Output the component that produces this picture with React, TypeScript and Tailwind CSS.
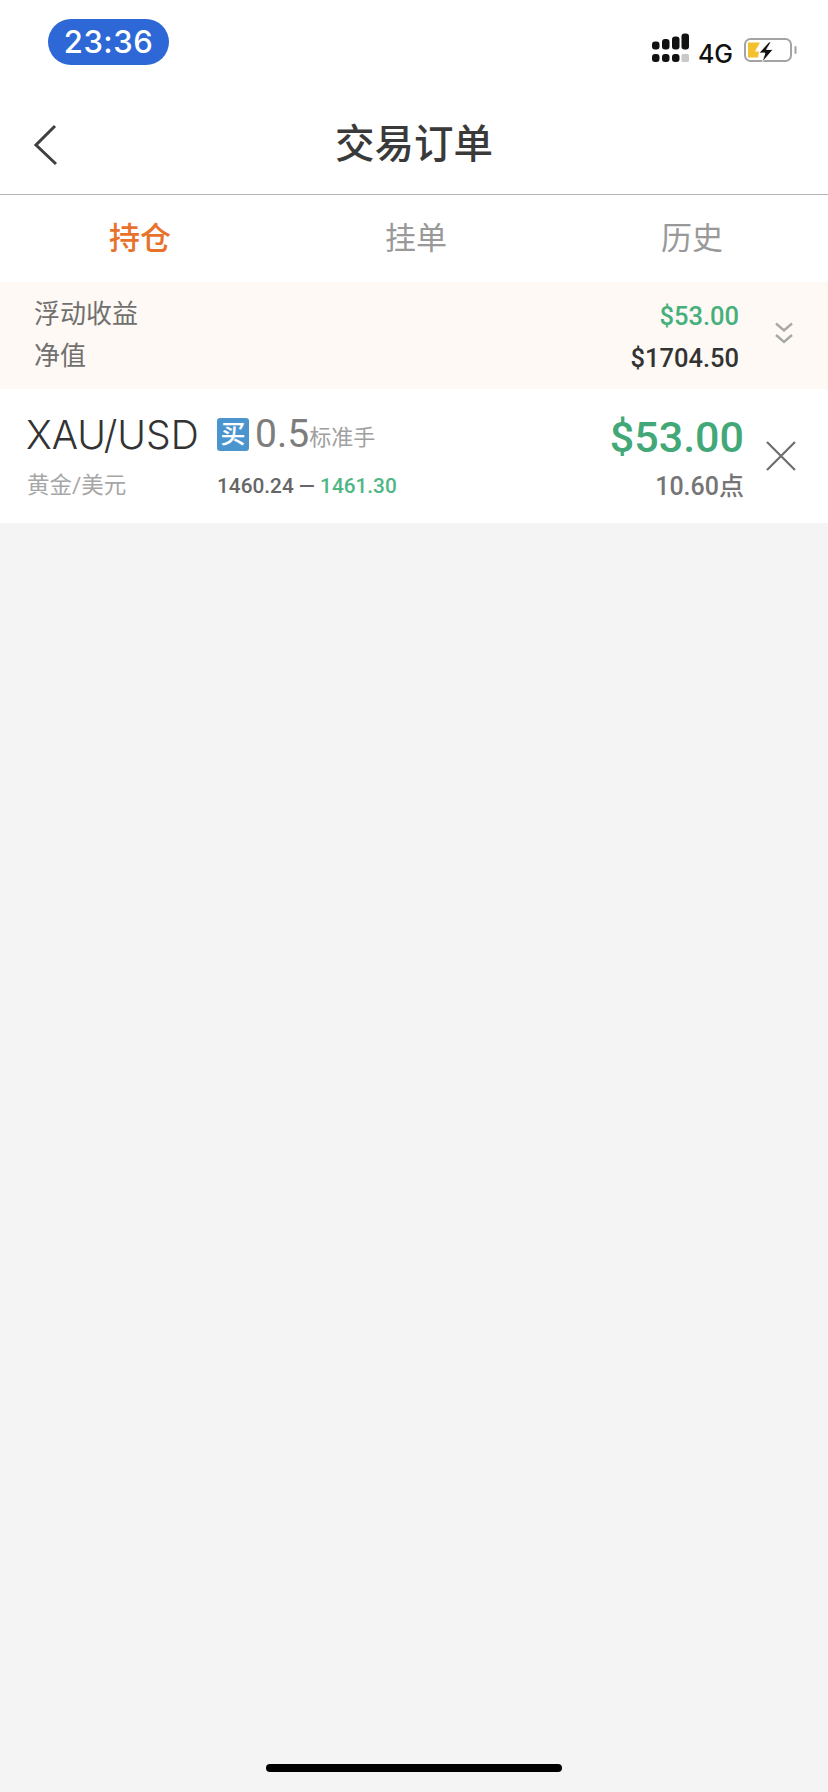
import React from "react";

const cjk = "font-['Roboto','Noto_Sans_CJK_SC',sans-serif]";

function Signal() {
  return (
    <svg width="37" height="30" viewBox="0 0 37 30" className="block">
      <rect x="0" y="8.5" width="7.5" height="8" rx="3" fill="#111" />
      <rect x="10" y="6" width="7.5" height="10.5" rx="3" fill="#111" />
      <rect x="20" y="3.5" width="7.5" height="13" rx="3" fill="#111" />
      <rect x="29.5" y="0.5" width="7.5" height="16" rx="3" fill="#111" />
      {[0, 10, 20].map((x) => (
        <rect key={x} x={x} y="21" width="7.5" height="8" rx="3" fill="#111" />
      ))}
      <rect x="29.5" y="21" width="7.5" height="8" rx="1.5" fill="#c9c9c9" />
    </svg>
  );
}

function Battery() {
  return (
    <svg width="53" height="30" viewBox="0 0 53 30" className="block">
      <rect x="1" y="6" width="46" height="22" rx="5.5" fill="none" stroke="#a3a3a3" strokeWidth="2" />
      <path d="M4 9.5h12l-5 9h4l-1 6H4z" fill="#f3c12f" />
      <path d="M25 9l-10 11h6l-3 9.5 11-13h-6.5l4.5-7.5z" fill="#111" stroke="#fff" strokeWidth="0.8" />
      <rect x="50.5" y="13" width="2" height="8" rx="1" fill="#a3a3a3" />
    </svg>
  );
}

export default function App() {
  return (
    <div className={`flex min-h-[1792px] w-[828px] flex-col bg-[#f4f4f4] ${cjk}`}>
      <div className="bg-white">
        <div className="flex h-[82px] items-start justify-between pl-[48px] pr-[31px]">
          <div className="mt-[19px] flex h-[46px] w-[121px] items-center justify-center rounded-full bg-[#2d68d6] font-['Inter',sans-serif] text-[31px] font-medium tracking-[0.5px] text-white">
            23:36
          </div>
          <div className="mt-[33px] flex items-start">
            <Signal />
            <span className="ml-[9px] mr-[11px] mt-[6px] font-['Inter',sans-serif] text-[25px] font-medium leading-[30px] text-[#111]">4G</span>
            <Battery />
          </div>
        </div>
        <div className="relative flex h-[113px] items-center justify-center border-b border-[#b5b5b5] pt-[13px]">
          <svg width="26" height="42" viewBox="0 0 26 42" className="absolute left-[33px] top-[42px]" fill="none" stroke="#404040" strokeWidth="3">
            <path d="M22 2L3 21l20 19" />
          </svg>
          <h1 className="text-[39.5px] font-medium leading-none text-[#3a3a3a]">交易订单</h1>
        </div>
        <div className="grid h-[87px] grid-cols-[276px_276px_276px] items-center pl-[2px] pt-[2px] text-center text-[31px] text-[#999999]">
          <div className="font-medium text-[#e8722c]">持仓</div>
          <div>挂单</div>
          <div>历史</div>
        </div>
      </div>

      <div className="flex h-[107px] items-center bg-[#fef9f4] pl-[34px] pr-[35px]">
        <div className="flex flex-1 flex-col gap-[9px] text-[26px] leading-[33px] text-[#707070]">
          <div>浮动收益</div>
          <div>净值</div>
        </div>
        <div className="mr-[36px] flex translate-y-[2px] flex-col items-end gap-[9px] text-[25.5px] font-medium leading-[33px]">
          <div className="text-[#46b07c]">$53.00</div>
          <div className="text-[#333333]">$1704.50</div>
        </div>
        <svg width="18" height="22" viewBox="0 0 18 22" className="mb-[6px]" fill="none" stroke="#a8a8a8" strokeWidth="2.4">
          <path d="M1 1.5l8 7 8-7M1 13l8 7 8-7" />
        </svg>
      </div>

      <div className="flex h-[134px] items-center bg-white pl-[26px] pr-[31px]">
        <div className="flex w-[191px] -translate-y-[1px] flex-col">
          <div className="font-['Inter',sans-serif] text-[39px] font-light leading-[50px] text-[#333333]">XAU/USD</div>
          <div className="ml-[1px] mt-[10px] text-[22.5px] leading-[30px] text-[#a6a6a6]">黄金/美元</div>
        </div>
        <div className="flex w-[380px] -translate-y-[1px] flex-col">
          <div className="flex items-center">
            <span className="flex h-[33px] w-[32px] items-center justify-center rounded-[3px] bg-[#4b95cf] text-[25px] font-medium leading-none text-white">买</span>
            <span className="ml-[6px] text-[39px] leading-[50px] text-[#7d7d7d]">0.5</span>
            <span className="mt-[6px] text-[22px] text-[#a0a0a0]">标准手</span>
          </div>
          <div className="mt-[12px] text-[20.8px] font-medium leading-[30px] text-[#666666]">
            1460.24 — <span className="text-[#4fb785]">1461.30</span>
          </div>
        </div>
        <div className="ml-auto flex flex-col items-end">
          <div className="pt-[2px] text-[43px] font-medium leading-[50px] text-[#42a877]">$53.00</div>
          <div className="mt-[10px] text-[25px] font-medium leading-[30px] text-[#757575]">10.60点</div>
        </div>
        <svg width="32" height="32" viewBox="0 0 32 32" className="ml-[21px]" fill="none" stroke="#6e6e6e" strokeWidth="2.2">
          <path d="M2 2l28 28M30 2L2 30" />
        </svg>
      </div>

      <div className="flex flex-1 items-end justify-center pb-[20px]">
        <div className="h-[8px] w-[296px] rounded-full bg-black" />
      </div>
    </div>
  );
}
